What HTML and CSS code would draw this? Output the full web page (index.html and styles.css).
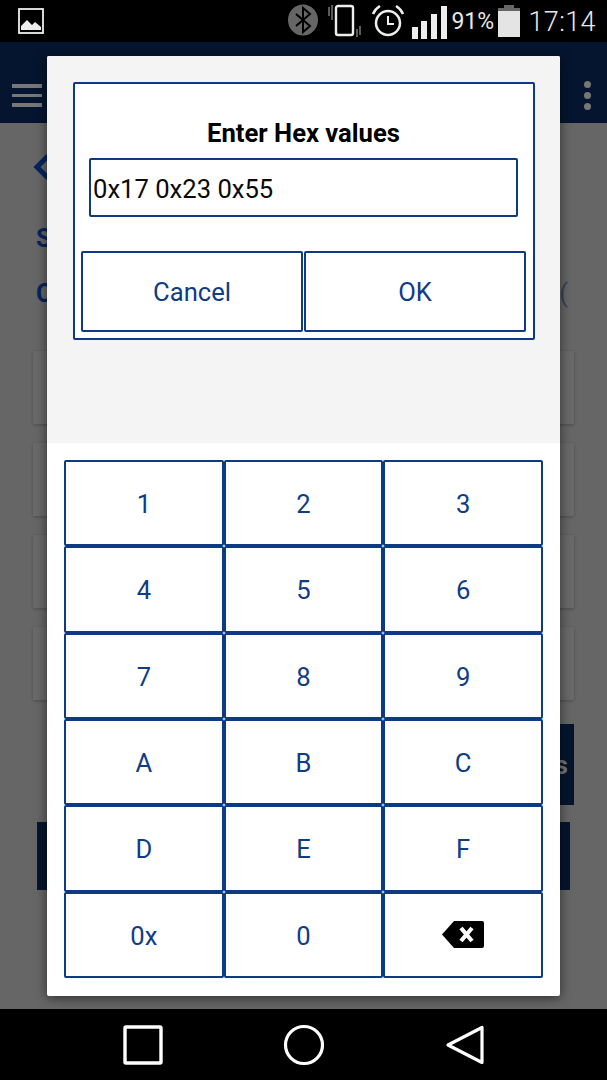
FILE: index.html
```html
<!DOCTYPE html>
<html lang="en">
<head>
<meta charset="utf-8">
<title>Enter Hex values</title>
<link rel="stylesheet" href="styles.css">
</head>
<body>
<div class="phone">
  <header class="status">
    <svg class="ic-image" viewBox="0 0 26 26" width="26" height="26"><rect x="1" y="1" width="24" height="24" fill="none" stroke="#eee" stroke-width="1.8"/><path d="M3 22v-4l6-6 5 5 3-3 6 5v3z" fill="#eee"/></svg>
    <span class="status-fill"></span>
    <svg class="ic-bt" viewBox="0 0 30 32" width="30" height="32"><ellipse cx="15" cy="16" rx="15" ry="15.5" fill="#666"/><path d="M8 10l14 12-7 6V4l7 6L8 22" fill="none" stroke="#000" stroke-width="2"/></svg>
    <svg class="ic-phone" viewBox="0 0 34 36" width="34" height="36"><rect x="8" y="2" width="17" height="29" rx="2" fill="none" stroke="#eee" stroke-width="2.4"/><path d="M1 3v9M4 1v15M29 25v8M32 22v9" stroke="#999" stroke-width="1.2" fill="none"/></svg>
    <svg class="ic-alarm" viewBox="0 0 34 34" width="34" height="34"><circle cx="17" cy="19" r="12" fill="none" stroke="#eee" stroke-width="2.5"/><path d="M17 12v8h6" fill="none" stroke="#eee" stroke-width="2"/><path d="M2 10q2-5 7-8M32 10q-2-5-7-8" fill="none" stroke="#eee" stroke-width="2.6"/></svg>
    <svg class="ic-signal" viewBox="0 0 35 33" width="35" height="33"><path d="M0 21h6v12H0zM9 15h6v18H9zM19 8h6v25h-6zM29 0h6v33h-6z" fill="#eee"/></svg>
    <span class="pct">91%</span>
    <svg class="ic-batt" viewBox="0 0 22 32" width="22" height="32"><path d="M6 0h10v3H6z" fill="#666"/><path d="M0 3h22v3H0z" fill="#666"/><path d="M0 6h22v26H0z" fill="#e4e4e4"/></svg>
    <span class="time">17:14</span>
  </header>

  <div class="appbar">
    <div class="menu"><i></i><i></i><i></i></div>
    <div class="dots"><i></i><i></i><i></i></div>
  </div>

  <main class="back">
    <svg class="chevron" viewBox="0 0 18 26" width="18" height="26"><path d="M15 2L4 13l11 11" fill="none" stroke="#05245f" stroke-width="5"/></svg>
    <div class="back-line first"><span>S</span></div>
    <div class="back-line second"><span>C</span><span class="muted">(</span></div>
    <div class="card"></div>
    <div class="card"></div>
    <div class="card"></div>
    <div class="card last"></div>
    <div class="btn-one"><span>s</span></div>
    <div class="btn-two"></div>
  </main>

  <footer class="nav">
    <svg viewBox="0 0 42 42" width="42" height="42"><rect x="3" y="3" width="36" height="36" rx="1" fill="none" stroke="#fff" stroke-width="3.4"/></svg>
    <svg viewBox="0 0 42 42" width="42" height="42"><circle cx="21" cy="21" r="18.5" fill="none" stroke="#fff" stroke-width="3.2"/></svg>
    <svg viewBox="0 0 42 42" width="42" height="42"><path d="M38 3.500V38.500L4 21z" fill="none" stroke="#fff" stroke-width="3.200" stroke-linejoin="round"/></svg>
  </footer>

  <section class="dialog">
    <div class="dialog-top">
      <div class="box">
        <h1 class="title">Enter Hex values</h1>
        <div class="field">0x17 0x23 0x55</div>
        <div class="actions">
          <button class="key action">Cancel</button>
          <button class="key action">OK</button>
        </div>
      </div>
    </div>
    <div class="keypad">
      <button class="key">1</button><button class="key">2</button><button class="key">3</button>
      <button class="key">4</button><button class="key">5</button><button class="key">6</button>
      <button class="key">7</button><button class="key">8</button><button class="key">9</button>
      <button class="key">A</button><button class="key">B</button><button class="key">C</button>
      <button class="key">D</button><button class="key">E</button><button class="key">F</button>
      <button class="key">0x</button><button class="key">0</button>
      <button class="key" aria-label="Backspace"><svg class="del" viewBox="0 0 42 27" width="42" height="27"><path d="M12 0h28a2 2 0 0 1 2 2v23a2 2 0 0 1-2 2H12L0 13.500z" fill="#000"/><path d="M19 7l11 13M30 7L19 20" stroke="#fff" stroke-width="4.200" fill="none"/></svg></button>
    </div>
  </section>
</div>
</body>
</html>
```
FILE: styles.css
```css
* { box-sizing: border-box; }
html, body { margin: 0; padding: 0; }
body { background: #666; font-family: Roboto, "Noto Sans", sans-serif; }
.phone { position: relative; width: 607px; height: 1080px; overflow: hidden; display: flex; flex-direction: column; background: #666; }

.status { height: 42px; background: #000; display: flex; align-items: center; color: #e8e8e8; padding: 0 11px 0 18px; flex: none; }
.status-fill { flex: 1; }
.ic-image { margin-top: -1px; flex: none; }
.ic-bt { margin-top: -2px; flex: none; }
.ic-phone { margin-left: 10px; margin-top: 2px; flex: none; }
.ic-alarm { margin-left: 9px; flex: none; }
.ic-signal { margin-left: 7px; margin-top: 2px; flex: none; }
.pct { font-size: 23px; margin-left: 4px; width: 47px; flex: none; }
.ic-batt { flex: none; }
.time { font-size: 27px; font-weight: 300; margin-left: 8px; margin-top: 1px; letter-spacing: 0.4px; flex: none; }

.appbar { height: 81px; background: #05152f; flex: none; display: flex; justify-content: space-between; align-items: center; padding: 26px 16px 0 12px; }
.menu { display: flex; flex-direction: column; gap: 6px; }
.menu i { display: block; width: 30px; height: 3.500px; background: #777; }
.dots { display: flex; flex-direction: column; gap: 4px; }
.dots i { display: block; width: 7px; height: 7px; border-radius: 50%; background: #777; }

.back { flex: 1; display: flex; flex-direction: column; padding: 0 33px; position: relative; }
.chevron { margin-top: 31px; }
.back-line { display: flex; justify-content: space-between; color: #05245f; font-weight: 700; font-size: 25.600px; line-height: 28px; padding: 0 0 0 3px; }
.back-line.first { margin-top: 44px; }
.back-line.second { margin-top: 27px; }
.muted { color: #344360; font-weight: 400; margin-right: 6px; }
.card { height: 73px; background: #696969; box-shadow: 0 1px 3px rgba(0,0,0,.25); margin-bottom: 19px; }
.back-line.second + .card { margin-top: 44px; }
.card.last { margin-bottom: 24px; }
.btn-one { height: 81px; background: #05152f; margin-left: 14px; display: flex; justify-content: flex-end; align-items: center; color: #777; font-weight: 700; font-size: 25.600px; padding-right: 6px; }
.btn-two { height: 68px; background: #05152f; margin: 17px 4px 0; }

.nav { height: 71px; background: #000; flex: none; display: flex; justify-content: flex-start; gap: 119px; align-items: center; padding: 0 0 0 122px; }

.dialog { position: absolute; left: 47px; top: 56px; width: 513px; height: 940px; background: #fff; border-radius: 2px; box-shadow: 0 2px 12px rgba(0,0,0,.55); display: flex; flex-direction: column; }
.dialog-top { height: 387px; background: #f4f4f4; padding: 26px 25px 0 26px; border-radius: 2px 2px 0 0; }
.box { height: 258px; background: #fff; border: 2px solid #0d3a82; border-radius: 2px; padding: 35px 6px 0; display: flex; flex-direction: column; }
.title { margin: 0; height: 28px; font-size: 25.600px; line-height: 28px; font-weight: 700; color: #000; text-align: center; padding-right: 1px; }
.field { margin: 11px 9px 0 8px; height: 59px; border: 2px solid #0d3a82; border-radius: 2px; font-size: 25.600px; line-height: 59px; padding-left: 2px; color: #0a0a0a; }
.actions { margin-top: 34px; display: grid; grid-template-columns: 222px 222px; gap: 1px; }
.key { display: flex; align-items: center; justify-content: center; padding: 2px 0 0; background: #fff; border: 2px solid #0d3a82; border-radius: 2px; font-family: inherit; font-size: 25.600px; color: #0f3d85; }
.action { height: 81px; padding-top: 0; }
.keypad { flex: 1; padding: 17px 17px 18px; display: grid; grid-template-columns: repeat(3, 1fr); grid-template-rows: repeat(6, 1fr); }
.del { margin-top: -2px; }
```
